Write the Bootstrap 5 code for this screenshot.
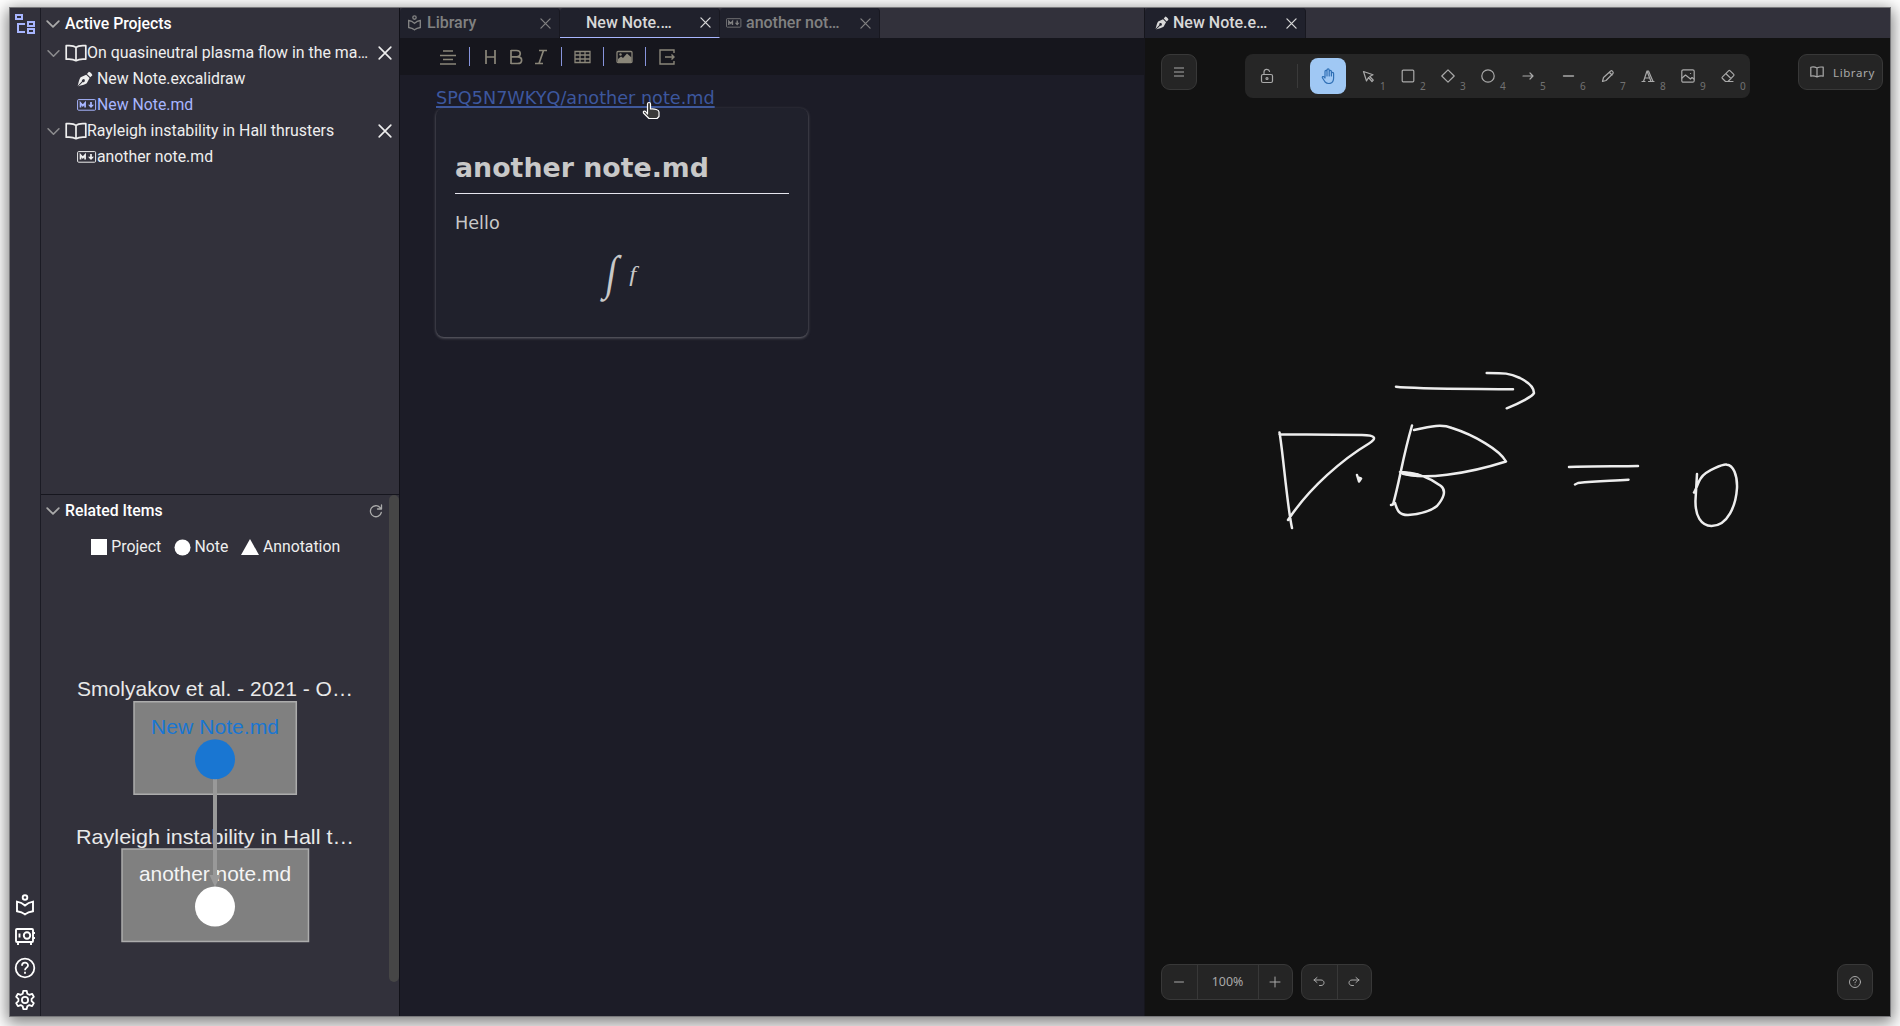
<!DOCTYPE html>
<html lang="en">
<head>
<meta charset="utf-8">
<title>Notes workspace</title>
<link href="https://cdn.jsdelivr.net/npm/bootstrap@5.3.0/dist/css/bootstrap.min.css" rel="stylesheet">
<style>
html,body{height:100%;overflow:hidden}
body{background:#fff;font-family:Roboto,sans-serif;font-size:16px;line-height:26px;color:#eee;padding:8px 10px 10px 10px}
.app-window{height:1008px;width:1880px;background:#32313b;box-shadow:0 0 0 1px #77777a,0 4px 15px 3px rgba(0,0,0,.5)}
svg{display:block;flex:none}
.ln{fill:none;stroke:currentColor;stroke-linecap:round;stroke-linejoin:round}
.rail{width:31px;border-right:1px solid #1b1b24;padding:4px 0 4px}
.rail-tools{gap:8px}
.side{width:358px}
.projects{height:487px;border-bottom:1px solid #16161e}
.tree-head{height:31px;padding-left:5px;font-weight:500;color:#fff;font-size:15.800px}
.projects .tree-head{height:32px;padding-bottom:1px}
.tree-row{height:26px;padding-left:6px;padding-right:3px;font-size:15.900px}
.chev{color:#aaa;margin-right:5px}
.tree-row .chev{margin-right:5px}
.tree-leaf{padding-left:36px}
.tree-leaf>span{font-size:15.800px}
.is-active{color:#a8b6ff}
.related{height:521px}
.thumb{width:10px;height:487px;border-radius:5px;background:#464646}
.legend-row{height:24px;gap:13px;margin-top:9px;padding-left:1px;line-height:24px;font-size:15.800px}
.legend-row span{gap:3.500px}
.editor{width:745px;border-left:1px solid #111118;background:#1c1c27}
.tabs{height:30px;background:#32313b}
.tab-item{width:160px;height:30px;background:#20212c;color:#818181;font-weight:500;border-right:1px solid #181820;border-radius:4px 4px 0 0;padding:0 8px 0 6px;flex:none}
.tab-item.current{color:#d8d8d8;border-bottom:1px solid #a8b6ff}
.fmt{height:37px;background:#16161d;color:#8a8679;padding-left:38px}
.fmt i{width:1px;height:19px;background:#8794dc}
.doc{font-family:"DejaVu Sans",sans-serif;font-size:17.650px;padding:10px 0 0 36px;position:relative}
.doc a{color:#3c579e;text-decoration-thickness:2px;text-underline-offset:2px}
.preview{position:absolute;left:36px;top:33px;width:372px;height:229px;border-radius:8px;background:#20212c;color:#c8c8c8;padding:39px 19px;box-shadow:0 1px 3px #6a6a72}
.preview h1{font-size:26.800px;line-height:42px;height:47px;font-weight:700;margin:0;border-bottom:1px solid #e5e5ee}
.preview p{margin:16px 0 0}
.pointer{position:absolute;left:242px;top:26px}
.board{width:746px;background:#121212;border-left:1px solid #16161d}
.board .tab-item{color:#d8d8d8;width:161px}
.board-area{position:relative;color:#a9a9a9;font-family:"Noto Sans",sans-serif}
.ink{position:absolute;left:0;top:0}
.board-ui{position:relative;height:978px;padding:16px 7px 16px 16px}
.xb{height:36px;background:#252525;border:1px solid #383838;border-radius:9px}
.sq{width:36px}
.island{height:44px;width:505px;background:#262626;border-radius:8px;padding:4px}
.tool{width:36px;height:36px;flex:none;position:relative;margin-right:4px;display:flex;align-items:center;justify-content:center}
.tool b{position:absolute;right:0;bottom:2px;font-size:10px;line-height:12px;font-weight:400;color:#727272;width:6px}
.tool.on{background:#a0c8f4;color:#2f6fb5;border-radius:8px}
.split{width:21px;flex:none}
.split span{height:24px;border-left:1px solid #3a3a3a;margin-left:8px}
.t12{font-size:12.400px}
.lib-label{font-size:11.500px;letter-spacing:.6px;margin-left:9px;position:relative;top:1px}
.cell{width:34.500px;display:flex;align-items:center;justify-content:center;height:34px}
.cell+.cell{border-left:1px solid #383838}
.cell.pct{width:61px}
</style>
</head>
<body>
<svg width="0" height="0" class="position-absolute">
<symbol id="chev" viewBox="0 0 12 12"><path class="ln" stroke-width="1.5" d="M1 3.5l5 5 5-5"/></symbol>
<symbol id="x" viewBox="0 0 12 12"><path class="ln" stroke-width="1.4" d="M1 1l10 10M11 1L1 11"/></symbol>
<symbol id="book" viewBox="0 0 22 18"><path class="ln" stroke-width="1.7" d="M11 3.5C9 1.600 5 1.300 1.200 1.700v13.500c4-.4 7.500 0 9.800 1.500 2.300-1.500 5.800-1.900 9.800-1.500V1.700C17 1.300 13 1.600 11 3.500zM11 3.500v13"/></symbol>
<symbol id="md" viewBox="0 0 20 12"><rect x=".6" y=".6" width="18" height="10.600" rx="1" fill="none" stroke="currentColor" stroke-width="1"/><path fill="none" stroke="currentColor" stroke-width="1.700" d="M3.500 8.500V4l2.300 2.600L8.100 4v4.500M14 3v5"/><path fill="currentColor" d="M11 5.800h6L14 9z"/></symbol>
<symbol id="pen" viewBox="0 0 16 16"><path fill="currentColor" fill-rule="evenodd" d="M.6 14.900C1.800 11.500 2 8.500 3.600 6.300L9.200 3.700l3.400 3.400-2.800 5.200C7.600 13.800 4.500 14.200 1.300 15.500L5.800 11a1.500 1.500 0 1 0-.8-.8zM10 2.900L11.900.7c1.500.5 2.900 1.900 3.500 3.500L13.300 6.200z"/></symbol>
<symbol id="reader" viewBox="0 0 20 22"><g fill="none" stroke="currentColor" stroke-width="1.900"><circle cx="10" cy="3.500" r="2.300"/><path d="M10 11.500C8 9.500 5 8 2 7.600v9.600c3 .4 6 1.500 8 3.200 2-1.700 5-2.800 8-3.200V7.600c-3 .4-6 1.900-8 3.900z"/></g></symbol>
</svg>
<div class="app-window d-flex">
 <nav class="rail d-flex flex-column justify-content-between align-items-center">
  <svg width="22" height="23" viewBox="0 0 22 23" fill="none" stroke="#a8b6ff" stroke-width="2"><path d="M2 3h6v4H2zM14 10h6v4h-6zM14 17h6v4h-6zM4 11v9h7M4 12h7"/></svg>
  <div class="rail-tools d-flex flex-column align-items-center text-white">
   <svg width="20" height="22"><use href="#reader"/></svg>
   <svg width="20" height="24" viewBox="0 0 20 24" fill="none" stroke="currentColor" stroke-width="1.900"><rect x="1" y="5" width="17" height="13" rx="1"/><circle cx="12" cy="11.500" r="3.200"/><path d="M4.500 9.500v4M3 19v2M16 19v2M19 8v2M19 13v2"/></svg>
   <svg width="22" height="24" viewBox="0 0 22 24" fill="none" stroke="currentColor" stroke-width="1.800"><circle cx="11" cy="12" r="9.300"/><path d="M8 9.700c0-4 6-4 6-.3 0 2.200-3 2.300-3 4.800M11 15.800v2"/></svg>
   <svg width="22" height="24" viewBox="0 0 22 24" fill="none" stroke="currentColor" stroke-width="1.800" stroke-linejoin="round"><circle cx="11" cy="12" r="3.100"/><path d="M9.300 2.800h3.400l.6 2.900 2 1.100 2.800-1 1.700 3-2.200 2v2.300l2.200 2-1.700 3-2.800-1-2 1.100-.6 2.900H9.300l-.6-2.900-2-1.100-2.800 1-1.700-3 2.200-2v-2.300l-2.200-2 1.700-3 2.800 1 2-1.100z"/></svg>
  </div>
 </nav>
 <aside class="side">
  <section class="projects">
   <div class="tree-head d-flex align-items-center"><svg class="chev" width="14" height="14"><use href="#chev"/></svg>Active Projects</div>
   <div class="tree-row d-flex align-items-center"><svg class="chev" width="13" height="13" opacity=".75"><use href="#chev"/></svg><svg width="22" height="18"><use href="#book"/></svg><span class="text-nowrap">On quasineutral plasma flow in the ma…</span><svg class="ms-auto me-1" width="14" height="14"><use href="#x"/></svg></div>
   <div class="tree-row tree-leaf d-flex align-items-center"><svg width="16" height="16" class="me-1"><use href="#pen"/></svg><span>New Note.excalidraw</span></div>
   <div class="tree-row tree-leaf d-flex align-items-center is-active"><svg width="20" height="12"><use href="#md"/></svg><span>New Note.md</span></div>
   <div class="tree-row d-flex align-items-center"><svg class="chev" width="13" height="13" opacity=".75"><use href="#chev"/></svg><svg width="22" height="18"><use href="#book"/></svg><span>Rayleigh instability in Hall thrusters</span><svg class="ms-auto me-1" width="14" height="14"><use href="#x"/></svg></div>
   <div class="tree-row tree-leaf d-flex align-items-center"><svg width="20" height="12"><use href="#md"/></svg><span>another note.md</span></div>
  </section>
  <section class="related d-flex">
   <div class="flex-grow-1">
    <div class="tree-head d-flex align-items-center"><svg class="chev" width="14" height="14"><use href="#chev"/></svg>Related Items<svg class="chev ms-auto" width="16" height="16" viewBox="0 0 16 16"><path class="ln" stroke-width="1.300" d="M13.300 9.500A5.500 5.500 0 1 1 12 4.500l1.200 1.200M13.500 2v4h-4"/></svg></div>
    <div class="legend-row d-flex justify-content-center">
     <span class="d-flex align-items-center"><svg width="17" height="17"><path fill="#fff" d="M0 0h16v16H0z"/></svg>Project</span>
     <span class="d-flex align-items-center"><svg width="17" height="17"><circle cx="8.500" cy="8.500" r="8" fill="#fff"/></svg>Note</span>
     <span class="d-flex align-items-center"><svg width="18" height="17"><path fill="#fff" d="M9 0l9 16H0z"/></svg>Annotation</span>
    </div>
    <svg width="348" height="420" viewBox="41 559 348 420" font-family="'Liberation Sans',sans-serif" font-size="21" fill="#e9e9e9">
     <path fill="#808080" stroke="#acacac" stroke-width="1.500" d="M134 701.700h162.300v92.600H134zM122 849h186.500v92.500H122z"/>
     <text x="77" y="696" textLength="276" lengthAdjust="spacingAndGlyphs">Smolyakov et al. - 2021 - O…</text>
     <text x="151" y="733.500" textLength="128" lengthAdjust="spacingAndGlyphs" fill="#1976d2">New Note.md</text>
     <text x="76" y="843.500" textLength="278" lengthAdjust="spacingAndGlyphs">Rayleigh instability in Hall t…</text>
     <text x="139" y="881" textLength="152" lengthAdjust="spacingAndGlyphs" fill="#f4f4f4">another note.md</text>
     <path stroke="#999" stroke-width="4" d="M215 778v103"/><path fill="#999" d="M209.500 875h11L215 887z"/>
     <circle cx="215" cy="759.300" r="20" fill="#1976d2"/><circle cx="215" cy="906.600" r="20" fill="#fff"/>
    </svg>
   </div>
   <div class="thumb"></div>
  </section>
 </aside>
 <main class="editor">
  <div class="tabs d-flex">
   <div class="tab-item d-flex align-items-center"><svg class="me-1" width="17" height="16" viewBox="0 0 20 22"><use href="#reader"/></svg>Library<svg class="ms-auto" width="11" height="11"><use href="#x"/></svg></div>
   <div class="tab-item current d-flex align-items-center"><span class="ps-3">&nbsp;New Note.…</span><svg class="ms-auto" width="11" height="11"><use href="#x"/></svg></div>
   <div class="tab-item d-flex align-items-center"><svg width="16" height="10" class="me-1"><use href="#md"/></svg><span>another not…</span><svg class="ms-auto" width="11" height="11"><use href="#x"/></svg></div>
  </div>
  <div class="fmt d-flex align-items-center">
   <svg width="31" height="20" viewBox="0 0 31 20"><path stroke="currentColor" stroke-width="1.400" d="M5 4h10M2 8.500h16M5 12.500h10M2 17h16"/></svg><i></i>
   <svg width="91" height="20" viewBox="0 0 91 20" fill="none" stroke="currentColor" stroke-width="1.700"><path d="M16 3v14M25 3v14M16 10h9M41 3v14M41 3.500h5.500c5 0 5 6.300 0 6.300H41h6.500c5.500 0 5.500 6.700 0 6.700H41M69 3.500h8M65 16.500h8M73.500 3.500l-4.500 13"/></svg><i></i>
   <svg width="41" height="20" viewBox="0 0 41 20" fill="none" stroke="currentColor" stroke-width="1.300"><path d="M13 4.500h15v11H13zM13 8h15M13 12h15M18 4.500v11M23 4.500v11"/></svg><i></i>
   <svg width="41" height="20" viewBox="0 0 41 20" fill="none" stroke="currentColor" stroke-width="1.300"><rect x="13" y="4.500" width="15" height="11" rx="1"/><path fill="currentColor" stroke="none" d="M14 14v-2l3-2.500 2 1.500 4-4.500 4.500 4V15H14z"/><circle cx="16.500" cy="7.500" r="1.200" fill="currentColor" stroke="none"/></svg><i></i>
   <svg width="41" height="20" viewBox="0 0 41 20" fill="none" stroke="currentColor" stroke-width="1.400"><path d="M28 6V3H14v14h14v-3M19 10h9M25.500 7.500L28 10l-2.500 2.500"/></svg>
  </div>
  <div class="doc">
   <a href="#">SPQ5N7WKYQ/another note.md</a>
   <div class="preview">
    <h1>another note.md</h1>
    <p>Hello</p>
    <svg width="334" height="76" fill="#c8c8c8" font-family="'Liberation Serif',serif"><text transform="translate(149 53) skewX(-9) scale(.8 1)" font-size="48">∫</text><text x="173" y="45" font-size="22" font-style="italic" transform="translate(176 0) scale(1.150 1) translate(-174.500 0)">f</text></svg>
   </div>
   <svg class="pointer" width="22" height="22" viewBox="0 0 22 22"><path fill="#3a3a3a" stroke="#fff" stroke-width="1.200" stroke-linejoin="round" d="M5.500 13V3c0-2 3-2 3 0v5c4-.5 8.500.8 8.500 3v4.500l-2 2H7L1.500 12c-.8-1.500 1-2.500 2-1.500z"/></svg>
  </div>
 </main>
 <section class="board">
  <div class="tabs d-flex"><div class="tab-item d-flex align-items-center"><svg width="14" height="14" class="ms-1 me-1"><use href="#pen"/></svg><span class="ms-0">New Note.e…</span><svg class="ms-auto" width="11" height="11"><use href="#x"/></svg></div></div>
  <div class="board-area">
   <svg class="ink ln" width="744" height="978" viewBox="1145 38 744 978" stroke="#ededed" stroke-width="2.500" style="color:#ededed">
    <path d="M1396 386.700C1415 389 1470 388.700 1513 389.300M1486.700 373C1505 373 1509 373 1520 378C1532 384 1534 390 1534 393C1533 396 1520 403 1506.700 408.300M1279.500 432.500C1283 452 1287 505 1292 528M1279.500 434.300L1362 435C1376 435 1377 438.500 1369 443.500C1343 459 1310 487 1288 520M1357 475l2 6.500 2-3-3-1M1412 425.500C1402 460 1400 480 1393 504.500l-2 .5M1414 430C1432 426 1442 424 1452 428C1474 435 1500 450 1506 461.500C1470 473 1420 482 1400 472C1418 472 1430 478 1441 486C1447 491 1443 499 1437 506C1431 511 1420 514 1408 515C1398 515 1397 509 1395 503M1569 467C1590 466 1620 466.500 1638 466M1575 484.500l3-1.500C1598 481 1610 481 1628.500 479.700M1697 474L1695.500 500C1695 516 1701 525.700 1711.500 526C1728 526 1736 505 1737 488C1737.500 475 1733 465 1727 464.700C1724 464 1706 470 1701 478C1698 482 1696 490 1694 492.500"/>
    <path stroke-width="4" d="M1403 473c4 1 7 1.500 14 2"/>
   </svg>
   <div class="board-ui d-flex flex-column justify-content-between">
    <div class="d-flex justify-content-between align-items-start">
     <div class="xb sq d-flex align-items-center justify-content-center"><svg width="12" height="10" viewBox="0 0 12 10"><path stroke="currentColor" d="M1 1h10M1 5h10M1 9h10"/></svg></div>
     <div class="island d-flex">
      <div class="tool"><svg class="ln" width="14" height="16" viewBox="0 0 14 16" stroke-width="1.200"><rect x="1.500" y="6.500" width="11" height="8" rx="1.500"/><circle cx="7" cy="10.500" r="1"/><path d="M4 6.500V4c0-3.500 5-3.500 5.500-.7"/></svg></div>
      <div class="split d-flex align-items-center"><span></span></div>
      <div class="tool on"><svg class="ln" width="16" height="17" viewBox="0 0 16 17" stroke-width="1.200"><path d="M5 10V3.500c0-1.500 2-1.500 2 0V8M7 3V2c0-1.500 2.200-1.500 2.200 0v6M9.200 3.500c0-1.500 2.200-1.500 2.200 0V8M11.400 5.500c0-1.500 2.200-1.500 2.200 0V10c0 7-6.500 6-8.500 4L2.500 10c-.7-1.400.8-2 2-.8L5 10"/></svg></div>
      <div class="tool"><svg class="ln" width="14" height="14" viewBox="0 0 14 14" stroke-width="1.200"><path d="M2.500 2.500l3 9.500 2-3.500 3.500 4 1.300-1.300L8.700 7.500 12 5.800z"/></svg><b>1</b></div>
      <div class="tool"><svg class="ln" width="14" height="14" stroke-width="1.200"><rect x="1.200" y="1.200" width="11.600" height="11.600" rx="1"/></svg><b>2</b></div>
      <div class="tool"><svg class="ln" width="14" height="14" stroke-width="1.200"><path d="M7 .8L13.200 7 7 13.200.8 7z"/></svg><b>3</b></div>
      <div class="tool"><svg class="ln" width="14" height="14" stroke-width="1.200"><circle cx="7" cy="7" r="6.200"/></svg><b>4</b></div>
      <div class="tool"><svg class="ln" width="14" height="14" stroke-width="1.200"><path d="M2 7h10M9 4l3 3-3 3"/></svg><b>5</b></div>
      <div class="tool"><svg class="ln" width="14" height="14" stroke-width="1.400"><path d="M2.500 7h10"/></svg><b>6</b></div>
      <div class="tool"><svg class="ln" width="14" height="14" stroke-width="1.200"><path d="M1.500 12.500l1-4L9.700 2c1-1 3.300 1 2.300 2.500L5 11.500zM8.500 3.500l2.500 2.500"/></svg><b>7</b></div>
      <div class="tool"><svg class="ln" width="14" height="14" stroke-width="1.200"><path d="M1 12.500h3M7.500 12.500H13M2.500 12.500L6 2h1.500l4.500 10.500M6 2l4 10.500M4 9h4.500"/></svg><b>8</b></div>
      <div class="tool"><svg class="ln" width="14" height="14" stroke-width="1.200"><rect x=".8" y=".8" width="12.400" height="12.400" rx="1.500"/><path d="M1 9l3.500-3 5 4 1.500-1.500 2 1.500M9.500 4.500h.1"/></svg><b>9</b></div>
      <div class="tool"><svg class="ln" width="14" height="14" stroke-width="1.200"><path d="M4.500 12.500L1.500 9.500c-.7-.7-.7-1 0-1.700l6-6c.7-.7 1-.7 1.700 0l3.300 3.300c.7.700.7 1 0 1.700L7 12.500zM5 4.700L10 9.500M4.500 12.500H12"/></svg><b>0</b></div>
     </div>
     <div class="xb d-flex align-items-center" style="width:85px;padding-left:11px"><svg class="ln" width="14" height="12" stroke-width="1.200"><path d="M7 2C5 .8 2 .8 .8 1.200v9C3 9.500 5 10 7 11c2-1 4-1.500 6.200-.8v-9C11 .8 9 .8 7 2zM7 2v9"/></svg><span class="lib-label">Library</span></div>
    </div>
    <div class="d-flex align-items-end" style="padding-right:10px">
     <div class="xb d-flex t12"><div class="cell"><svg class="ln" width="12" height="12"><path d="M1.500 6h9"/></svg></div><div class="cell pct">100%</div><div class="cell"><svg class="ln" width="12" height="12"><path d="M1 6h10M6 1v10"/></svg></div></div>
     <div class="xb d-flex ms-2"><div class="cell"><svg class="ln" width="14" height="12"><path d="M5 1.500L2 4l3 2.500M2 4h7c4 0 4 5.500 0 5.500H7.500"/></svg></div><div class="cell"><svg class="ln" width="14" height="12"><path d="M9 1.500L12 4 9 6.500M12 4H5C1 4 1 9.500 5 9.500h1.500"/></svg></div></div>
     <div class="xb sq ms-auto d-flex align-items-center justify-content-center"><svg class="ln" width="14" height="14"><circle cx="7" cy="7" r="5.500"/><path d="M5.500 5.500c0-2 3.200-1.800 3 0 0 1-1.500 1-1.500 2.300M7 9.800v.1"/></svg></div>
    </div>
   </div>
  </div>
 </section>
</div>
<script src="https://cdn.jsdelivr.net/npm/bootstrap@5.3.0/dist/js/bootstrap.bundle.min.js"></script>
</body>
</html>
